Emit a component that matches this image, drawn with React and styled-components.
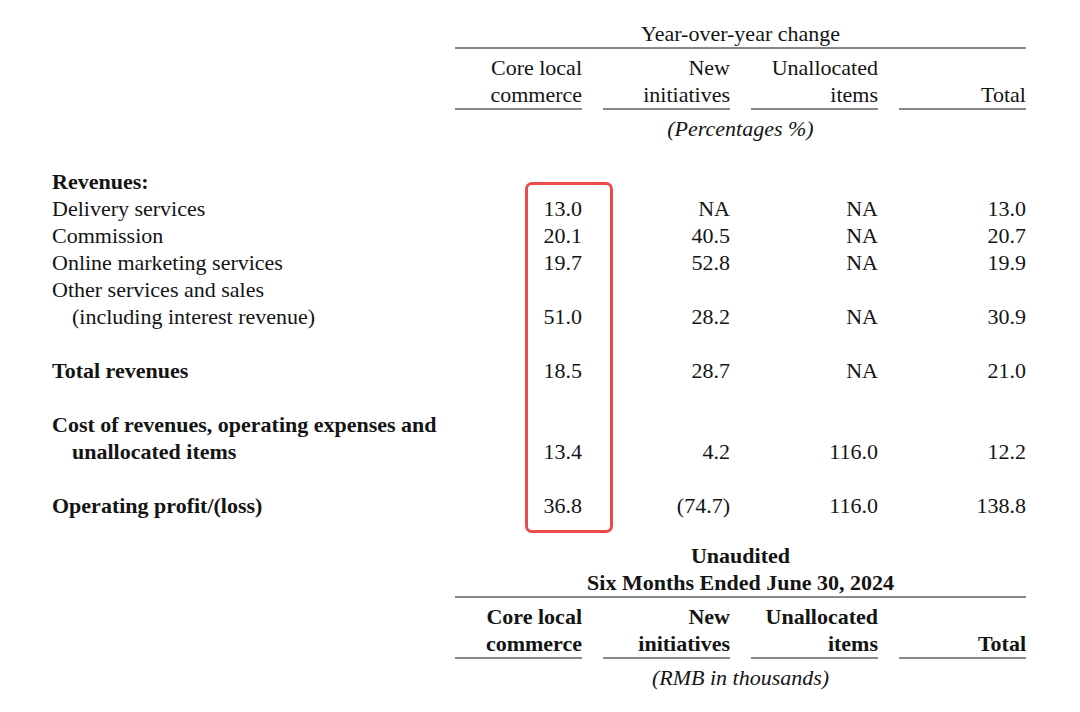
import styled, { createGlobalStyle } from "styled-components"

const GlobalStyle = createGlobalStyle`
  html, body {
    margin: 0;
    padding: 0;
    background: #ffffff;
  }
  body {
    font-family: "Liberation Serif", "Times New Roman", serif;
    color: #141414;
  }
`

const Page = styled.div`
  width: 1080px;
  height: 712px;
  padding: 20px 0 0 52px;
  box-sizing: border-box;
  font-size: 22px;
  line-height: 27px;
  overflow: hidden;
`

const Header = styled.div`
  width: 571px;
  margin-left: 403px;
  margin-top: ${props => props.$top || 0}px;
`

const Title = styled.div`
  text-align: center;
  font-weight: ${props => (props.$bold ? 700 : 400)};
  border-bottom: 2px solid #888;
`

const Columns = styled.div`
  display: grid;
  grid-template-columns: repeat(4, 127px);
  column-gap: 21px;
  padding-top: 5px;
`

const ColHead = styled.div`
  text-align: right;
  font-weight: ${props => (props.$bold ? 700 : 400)};
  border-bottom: 2px solid #888;
  display: flex;
  flex-direction: column;
  justify-content: flex-end;
`

const Caption = styled.div`
  text-align: center;
  font-style: italic;
  margin-top: 5px;
`

const Body = styled.div`
  position: relative;
  margin-top: 26px;
`

const Row = styled.div`
  display: grid;
  grid-template-columns: 382px repeat(4, 127px);
  column-gap: 21px;
  margin-top: ${props => props.$gap || 0}px;
  font-weight: ${props => (props.$bold ? 700 : 400)};
`

const Label = styled.div`
  white-space: nowrap;
`

const Indent = styled.div`
  padding-left: 20px;
`

const Num = styled.div`
  text-align: right;
  align-self: end;
  font-weight: 400;
`

const Highlight = styled.div`
  position: absolute;
  top: 14px;
  left: 473px;
  width: 88px;
  height: 351px;
  box-sizing: border-box;
  border: 3px solid #e94a4c;
  border-radius: 7px;
  pointer-events: none;
`

const heads = [
  ["Core local", "commerce"],
  ["New", "initiatives"],
  ["Unallocated", "items"],
  ["", "Total"],
]

const HeadBlock = ({ bold, children, caption, top }) => (
  <Header $top={top}>
    <Title $bold={bold}>{children}</Title>
    <Columns>
      {heads.map((h, i) => (
        <ColHead key={i} $bold={bold}>
          {h[0] && <div>{h[0]}</div>}
          <div>{h[1]}</div>
        </ColHead>
      ))}
    </Columns>
    <Caption>{caption}</Caption>
  </Header>
)

const DataRow = ({ label, sub, values = [], gap, bold }) => (
  <Row $gap={gap} $bold={bold}>
    <Label>
      <div>{label}</div>
      {sub && <Indent>{sub}</Indent>}
    </Label>
    {values.map((v, i) => (
      <Num key={i}>{v}</Num>
    ))}
  </Row>
)

const App = () => {
  return (
    <Page>
      <GlobalStyle />
      <HeadBlock caption="(Percentages %)">Year-over-year change</HeadBlock>
      <Body>
        <DataRow label="Revenues:" bold />
        <DataRow label="Delivery services" values={["13.0", "NA", "NA", "13.0"]} />
        <DataRow label="Commission" values={["20.1", "40.5", "NA", "20.7"]} />
        <DataRow label="Online marketing services" values={["19.7", "52.8", "NA", "19.9"]} />
        <DataRow
          label="Other services and sales"
          sub="(including interest revenue)"
          values={["51.0", "28.2", "NA", "30.9"]}
        />
        <DataRow label="Total revenues" bold gap={27} values={["18.5", "28.7", "NA", "21.0"]} />
        <DataRow
          label="Cost of revenues, operating expenses and"
          sub="unallocated items"
          bold
          gap={27}
          values={["13.4", "4.2", "116.0", "12.2"]}
        />
        <DataRow label="Operating profit/(loss)" bold gap={27} values={["36.8", "(74.7)", "116.0", "138.8"]} />
        <Highlight />
      </Body>
      <HeadBlock bold top={23} caption="(RMB in thousands)">
        <div>Unaudited</div>
        <div>Six Months Ended June 30, 2024</div>
      </HeadBlock>
    </Page>
  )
}

export default App
